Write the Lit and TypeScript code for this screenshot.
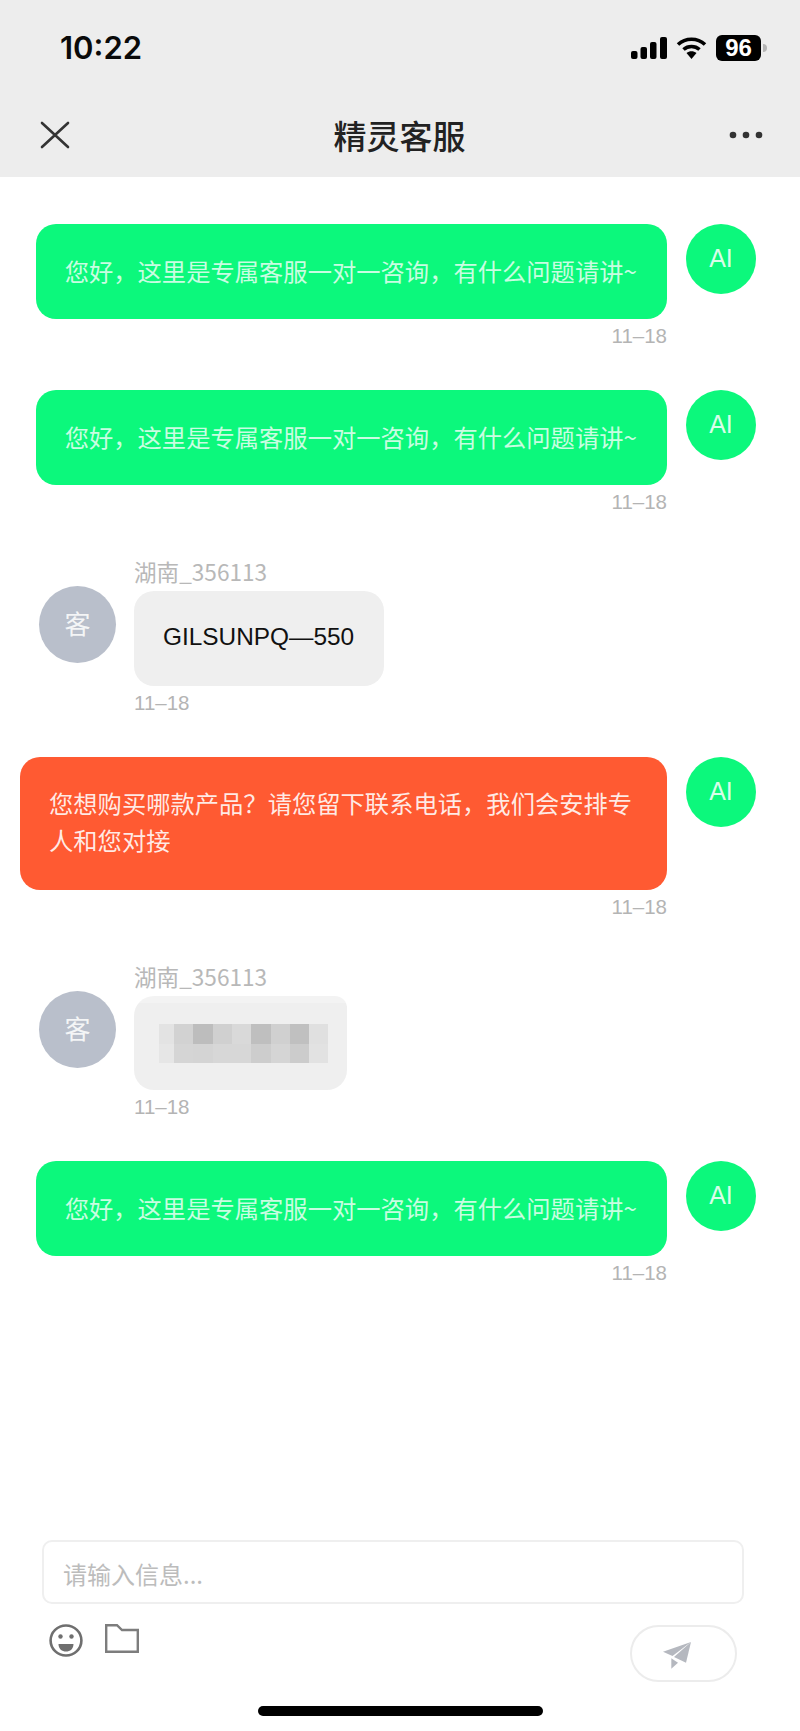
import { LitElement, html, css, svg } from "lit";
import { customElement } from "lit/decorators.js";

const GREETING = "您好，这里是专属客服一对一咨询，有什么问题请讲~";
const PIXEL_COLS = [15, 19, 20, 19, 19, 20, 19, 19, 19];
const PIXELS = [
  "#e3e3e3", "#d2d2d2", "#bdbdbd", "#d0d0d0", "#d9d9d9", "#bfbfbf", "#d0d0d0", "#c0c0c0", "#e0e0e0",
  "#e6e6e6", "#d5d5d5", "#d4d4d4", "#d7d7d7", "#d7d7d7", "#cdcdcd", "#d5d5d5", "#cccccc", "#e2e2e2",
];

@customElement("app-root")
export class AppRoot extends LitElement {
  static styles = css`
    :host {
      display: block;
      width: 800px;
      height: 1731px;
      background: #fff;
      font-family: "Noto Sans CJK SC", "Liberation Sans", sans-serif;
    }
    .page { display: flex; flex-direction: column; height: 1731px; }
    .top { background: #ededed; height: 177px; flex: none; display: flex; flex-direction: column; }
    .status { display: flex; justify-content: space-between; align-items: center; height: 48px; margin-top: 24px; padding: 0 33px 0 60px; }
    .time { font: 600 31px/48px Inter, "Liberation Sans", sans-serif; color: #0a0a0a; }
    .sys { display: flex; align-items: center; }
    .wifi { margin-left: 9px; }
    .battery { margin-left: 9px; width: 45px; height: 26px; border-radius: 6px; background: #000; color: #fff; display: flex; align-items: center; justify-content: center; font: 700 24px/26px "Liberation Sans", sans-serif; }
    .nub { margin-left: 2px; width: 4px; height: 8px; border-radius: 0 4px 4px 0; background: #b5b5b5; }
    .nav { display: flex; align-items: center; justify-content: space-between; height: 60px; margin-top: 33px; padding: 0 37px 0 40px; }
    .title { font-size: 33px; line-height: 60px; font-weight: 500; color: #222; }
    .list { flex: 1; display: flex; flex-direction: column; gap: 39px; padding-top: 47px; }
    .row { display: flex; align-items: flex-start; }
    .row.ai { justify-content: flex-end; padding-right: 44px; }
    .row.me { padding-left: 39px; }
    .col { display: flex; flex-direction: column; align-items: flex-end; }
    .me .col { align-items: flex-start; margin-left: 18px; }
    .avatar { flex: none; border-radius: 50%; display: flex; align-items: center; justify-content: center; color: rgba(255, 255, 255, 0.85); box-sizing: border-box; }
    .avatar.green { width: 70px; height: 70px; background: #0cf87c; margin-left: 19px; font: 400 25px/1 "Liberation Sans", sans-serif; padding-bottom: 2px; }
    .avatar.grey { width: 77px; height: 77px; background: #b9bfcb; margin-top: 30px; font-size: 26px; padding-bottom: 4px; }
    .bubble { border-radius: 20px; padding: 28px 30px 30px 29px; font-size: 24.3px; line-height: 37px; box-sizing: border-box; }
    .bubble.green { background: #0cf87c; color: rgba(255, 255, 255, 0.78); }
    .bubble.red { background: #ff5a32; color: rgba(255, 255, 255, 0.88); width: 647px; padding-top: 27px; padding-bottom: 32px; }
    .bubble.grey { background: #efefef; color: #111; font-family: "Liberation Sans", sans-serif; font-size: 24.4px; padding-top: 27px; padding-bottom: 31px; }
    .bubble.blur {
      width: 213px;
      height: 94px;
      padding: 28px 19px 27px 25px;
      display: grid;
      align-content: start;
      border-top-right-radius: 12px;
      background: linear-gradient(#f3f3f3 0 7px, #efefef 7px);
    }
    .date { font: 400 20.5px/31px "Liberation Sans", sans-serif; color: #b4b4b4; padding-top: 1px; }
    .name { font-size: 22.6px; line-height: 31px; padding-bottom: 4px; color: #b8b8b8; }
    .bottom { flex: none; padding: 0 56px 15px 42px; }
    .input { height: 64px; box-sizing: border-box; border: 2px solid #efefef; border-radius: 10px; padding: 2px 0 0 19px; font-size: 24px; line-height: 60px; color: #bcbcbc; }
    .tools { display: flex; align-items: flex-start; margin-top: 20px; padding-left: 7px; }
    .tools .folder { margin-left: 22px; }
    .send { margin-left: auto; margin-right: 7px; width: 107px; height: 57px; margin-top: 1px; padding: 4px 13px 0 0; box-sizing: border-box; border: 2px solid #ececec; border-radius: 29px; display: flex; align-items: center; justify-content: center; }
    .homewrap { display: flex; justify-content: center; margin: 24px 0 0 14px; }
    .home { width: 285px; height: 10px; border-radius: 5px; background: #000; }
  `;

  private ai(text: string, tone = "green") {
    return html`<div class="row ai">
      <div class="col"><div class="bubble ${tone}">${text}</div><div class="date">11–18</div></div>
      <div class="avatar green">AI</div>
    </div>`;
  }

  private me(content: unknown) {
    return html`<div class="row me">
      <div class="avatar grey">客</div>
      <div class="col"><div class="name">湖南_356113</div>${content}<div class="date">11–18</div></div>
    </div>`;
  }

  private statusIcons() {
    return html`<div class="sys">
      <svg width="36" height="22" viewBox="0 0 36 22" fill="#000">
        <rect x="0" y="14" width="6.5" height="8" rx="2"/>
        <rect x="9.5" y="10" width="6.5" height="12" rx="2"/>
        <rect x="19" y="5" width="6.5" height="17" rx="2"/>
        <rect x="29" y="0" width="7" height="22" rx="2"/>
      </svg>
      <svg class="wifi" width="31" height="22" viewBox="0 0 31 22" fill="none" stroke="#000" stroke-width="3.6">
        <path d="M2 7.5 C9.5 .5 21.5 .5 29 7.5"/>
        <path d="M7.5 12.5 C12 8.5 19 8.5 23.5 12.5"/>
        <path d="M10.5 16 L15.5 22 L20.5 16 C17.5 13.6 13.5 13.6 10.5 16 Z" fill="#000" stroke="none"/>
      </svg>
      <div class="battery">96</div>
      <div class="nub"></div>
    </div>`;
  }

  private blurred() {
    const cols = PIXEL_COLS.map((w) => `${w}px`).join(" ");
    return html`<div class="bubble grey blur" style="grid-template-columns:${cols};grid-auto-rows:19.5px">
      ${PIXELS.map((c) => html`<div style="background:${c}"></div>`)}
    </div>`;
  }

  render() {
    return html`<div class="page">
      <div class="top">
        <div class="status">
          <div class="time">10:22</div>
          ${this.statusIcons()}
        </div>
        <div class="nav">
          <svg width="30" height="28" viewBox="0 0 30 28" fill="none" stroke="#333" stroke-width="2.6" stroke-linecap="round">
            <path d="M2 2 L28 26 M28 2 L2 26"/>
          </svg>
          <div class="title">精灵客服</div>
          <svg width="34" height="8" viewBox="0 0 34 8" fill="#333">
            <circle cx="4" cy="4" r="3.3"/><circle cx="17" cy="4" r="3.3"/><circle cx="30" cy="4" r="3.3"/>
          </svg>
        </div>
      </div>
      <div class="list">
        ${this.ai(GREETING)}
        ${this.ai(GREETING)}
        ${this.me(html`<div class="bubble grey">GILSUNPQ—550</div>`)}
        ${this.ai("您想购买哪款产品？请您留下联系电话，我们会安排专人和您对接", "red")}
        ${this.me(this.blurred())}
        ${this.ai(GREETING)}
      </div>
      <div class="bottom">
        <div class="input">请输入信息...</div>
        <div class="tools">
          <svg width="34" height="33" viewBox="0 0 34 33" fill="none" stroke="#6f6f6f" stroke-width="2.6">
            <ellipse cx="17" cy="16.5" rx="15.4" ry="15"/>
            <circle cx="11.5" cy="12.5" r="2.2" fill="#6f6f6f" stroke="none"/>
            <circle cx="22.5" cy="12.5" r="2.2" fill="#6f6f6f" stroke="none"/>
            <path d="M9.5 20 H24.5 C24.5 25 21 27.5 17 27.5 C13 27.5 9.5 25 9.5 20 Z" fill="#6f6f6f" stroke="none"/>
          </svg>
          <svg class="folder" width="34" height="29" viewBox="0 0 34 29" fill="none" stroke="#7d7d7d" stroke-width="2.4">
            <path d="M1.2 1.2 H12 L17 6 H32.8 V27.8 H1.2 Z"/>
          </svg>
          <div class="send">
            <svg width="28" height="27" viewBox="0 0 28 27" fill="#b5b8bf">
              ${svg`<path d="M28 0 L0 9.7 L9.5 14 Z"/><path d="M28 0 L11 15 L23 20.7 Z"/><path d="M8.3 16.3 L8.3 26.7 L15 20.7 Z"/>`}
            </svg>
          </div>
        </div>
        <div class="homewrap"><div class="home"></div></div>
      </div>
    </div>`;
  }
}
